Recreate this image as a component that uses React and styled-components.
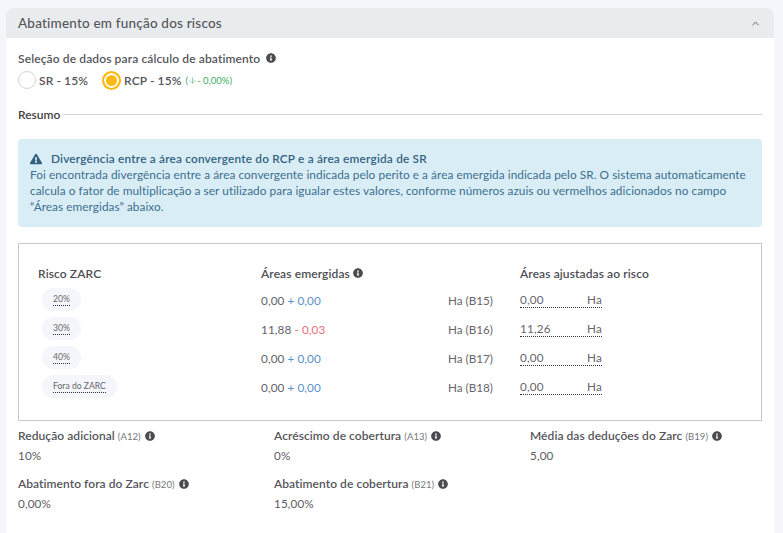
import React from "react"
import styled, { createGlobalStyle } from "styled-components"
import { FaInfoCircle, FaExclamationTriangle } from "react-icons/fa"
import { ChevronUp, ArrowDown } from "lucide-react"

const GlobalStyle = createGlobalStyle`
  html, body { margin: 0; padding: 0; background: #f4f6fb; }
  body { font-family: "Lato", "Open Sans", sans-serif; color: #4a4a4f; }
`

const Card = styled.section`
  margin: 8px 9px 0 6px;
  height: 525px;
  background: #fff;
  border-radius: 8px 8px 0 0;
  overflow: hidden;
`

const Header = styled.header`
  height: 30px;
  padding: 0 13px 0 12px;
  background: #e9ecef;
  display: flex;
  align-items: center;
  justify-content: space-between;
  font-size: 13.5px;
  font-weight: 500;
  letter-spacing: 0.2px;
  color: #55555a;
`

const Body = styled.div`
  padding: 12px 12px 0;
`

const FieldLabel = styled.div`
  display: flex;
  align-items: center;
  gap: 6px;
  height: 16px;
  font-size: 12px;
  font-weight: 600;
  letter-spacing: 0.12px;
  color: #55555a;
`

const RadioRow = styled.div`
  display: flex;
  align-items: center;
  gap: 14px;
  margin-top: 4px;
  height: 20px;
`

const RadioOption = styled.label`
  display: flex;
  align-items: center;
  gap: 3px;
  font-size: 12px;
  font-weight: 600;
  color: #55555a;
  letter-spacing: 0.1px;
`

const RadioDot = styled.span`
  box-sizing: border-box;
  width: ${p => (p.$checked ? 19 : 18)}px;
  height: ${p => (p.$checked ? 19 : 18)}px;
  border-radius: 50%;
  border: ${p => (p.$checked ? "2px solid #fdb813" : "1px solid #d4d4d4")};
  background: ${p => (p.$checked ? "#fdb813" : "#fff")};
  box-shadow: ${p => (p.$checked ? "inset 0 0 0 2px #fff" : "none")};
`

const Delta = styled.span`
  display: inline-flex;
  align-items: center;
  font-size: 9.5px;
  font-weight: 400;
  color: #43ac62;
  margin-left: 1px;
  letter-spacing: 0;
`

const SectionTitle = styled.div`
  display: flex;
  align-items: center;
  gap: 3px;
  margin-top: 17px;
  height: 14px;
  font-size: 12px;
  font-weight: 600;
  color: #3f3f44;
  &::after {
    content: "";
    flex: 1;
    height: 1px;
    background: #d4d4d8;
  }
`

const Alert = styled.div`
  margin-top: 18px;
  height: 88px;
  box-sizing: border-box;
  padding: 12px;
  border-radius: 4px;
  background: #d9edf7;
  color: #3d6f8e;
  font-size: 11.8px;
  line-height: 16px;
  letter-spacing: 0.06px;
`

const AlertTitle = styled.div`
  display: flex;
  align-items: center;
  gap: 9px;
  font-weight: 600;
  letter-spacing: 0.2px;
  color: #33627f;
`

const RiskBox = styled.div`
  margin-top: 16px;
  height: 178px;
  box-sizing: border-box;
  border: 1px solid #c8c8c8;
  padding: 17px 19px 0;
`

const RiskGrid = styled.div`
  display: grid;
  grid-template-columns: 223px 187px 72px 1fr;
  grid-template-rows: 24px repeat(4, 29px);
  align-items: center;
`

const HeadCell = styled.div`
  display: flex;
  align-items: center;
  gap: 3px;
  font-size: 12px;
  font-weight: 600;
  color: #4d4d52;
  letter-spacing: 0.1px;
`

const Pill = styled.span`
  justify-self: start;
  margin-left: 4px;
  padding: 0 11px;
  height: 23px;
  display: inline-flex;
  align-items: center;
  border-radius: 12px;
  background: #f4f6fb;
  font-size: 8.6px;
  color: #66666c;
`

const Dotted = styled.span`
  border-bottom: 1px dotted #33333a;
  line-height: 11px;
`

const AreaValue = styled.div`
  font-size: 11.7px;
  letter-spacing: 0.1px;
  color: #626268;
`

const Adjust = styled.span`
  color: ${p => (p.$negative ? "#e5707a" : "#5b92c9")};
`

const HaCode = styled.div`
  font-size: 11.7px;
  color: #66666c;
`

const AdjustedInput = styled.div`
  width: 82px;
  height: 15px;
  display: flex;
  justify-content: space-between;
  align-items: flex-start;
  border-bottom: 1px dotted #33333a;
  font-size: 11.7px;
  letter-spacing: 0.2px;
  color: #66666c;
  line-height: 14px;
`

const Summary = styled.div`
  display: grid;
  grid-template-columns: 256px 256px 1fr;
  row-gap: 11px;
  margin-top: 7px;
`

const SummaryItem = styled.div`
  height: 37px;
`

const SummaryLabel = styled.div`
  display: flex;
  align-items: center;
  gap: 4px;
  height: 15px;
  font-size: 12px;
  font-weight: 600;
  letter-spacing: 0.06px;
  color: #55555a;
`

const Code = styled.span`
  font-size: 9.5px;
  font-weight: 400;
  color: #77777c;
`

const SummaryValue = styled.div`
  margin-top: 5px;
  font-size: 11.7px;
  letter-spacing: 0.1px;
  color: #5c5c62;
`

const Info = styled(FaInfoCircle)`
  width: 10px;
  height: 10px;
  flex: none;
  color: #4a4a4f;
`

const rows = [
  { risk: "20%", base: "0,00", sign: "+", delta: "0,00", code: "B15", adjusted: "0,00" },
  { risk: "30%", base: "11,88", sign: "-", delta: "0,03", code: "B16", adjusted: "11,26" },
  { risk: "40%", base: "0,00", sign: "+", delta: "0,00", code: "B17", adjusted: "0,00" },
  { risk: "Fora do ZARC", base: "0,00", sign: "+", delta: "0,00", code: "B18", adjusted: "0,00" },
]

const summary = [
  { label: "Redução adicional", code: "A12", value: "10%" },
  { label: "Acréscimo de cobertura", code: "A13", value: "0%" },
  { label: "Média das deduções do Zarc", code: "B19", value: "5,00" },
  { label: "Abatimento fora do Zarc", code: "B20", value: "0,00%" },
  { label: "Abatimento de cobertura", code: "B21", value: "15,00%" },
]

export default function App() {
  return (
    <Card>
      <GlobalStyle />
      <Header>
        Abatimento em função dos riscos
        <ChevronUp size={11} strokeWidth={2} color="#555" />
      </Header>
      <Body>
        <FieldLabel>
          Seleção de dados para cálculo de abatimento <Info />
        </FieldLabel>
        <RadioRow>
          <RadioOption>
            <RadioDot />
            SR - 15%
          </RadioOption>
          <RadioOption>
            <RadioDot $checked />
            RCP - 15%
            <Delta>
              (<ArrowDown size={9} strokeWidth={1.5} />- 0,00%)
            </Delta>
          </RadioOption>
        </RadioRow>
        <SectionTitle>Resumo</SectionTitle>
        <Alert>
          <AlertTitle>
            <FaExclamationTriangle size={12} />
            Divergência entre a área convergente do RCP e a área emergida de SR
          </AlertTitle>
          Foi encontrada divergência entre a área convergente indicada pelo perito e a área emergida indicada pelo SR. O
          sistema automaticamente calcula o fator de multiplicação a ser utilizado para igualar estes valores, conforme
          números azuis ou vermelhos adicionados no campo “Áreas emergidas” abaixo.
        </Alert>
        <RiskBox>
          <RiskGrid>
            <HeadCell>Risco ZARC</HeadCell>
            <HeadCell>
              Áreas emergidas <Info />
            </HeadCell>
            <span />
            <HeadCell>Áreas ajustadas ao risco</HeadCell>
            {rows.map(row => (
              <React.Fragment key={row.code}>
                <Pill>
                  <Dotted>{row.risk}</Dotted>
                </Pill>
                <AreaValue>
                  {row.base}{" "}
                  <Adjust $negative={row.sign === "-"}>
                    {row.sign} {row.delta}
                  </Adjust>
                </AreaValue>
                <HaCode>Ha ({row.code})</HaCode>
                <AdjustedInput>
                  <span>{row.adjusted}</span>
                  <span>Ha</span>
                </AdjustedInput>
              </React.Fragment>
            ))}
          </RiskGrid>
        </RiskBox>
        <Summary>
          {summary.map(item => (
            <SummaryItem key={item.code}>
              <SummaryLabel>
                <span>
                  {item.label} <Code>({item.code})</Code>
                </span>
                <Info />
              </SummaryLabel>
              <SummaryValue>{item.value}</SummaryValue>
            </SummaryItem>
          ))}
        </Summary>
      </Body>
    </Card>
  )
}
